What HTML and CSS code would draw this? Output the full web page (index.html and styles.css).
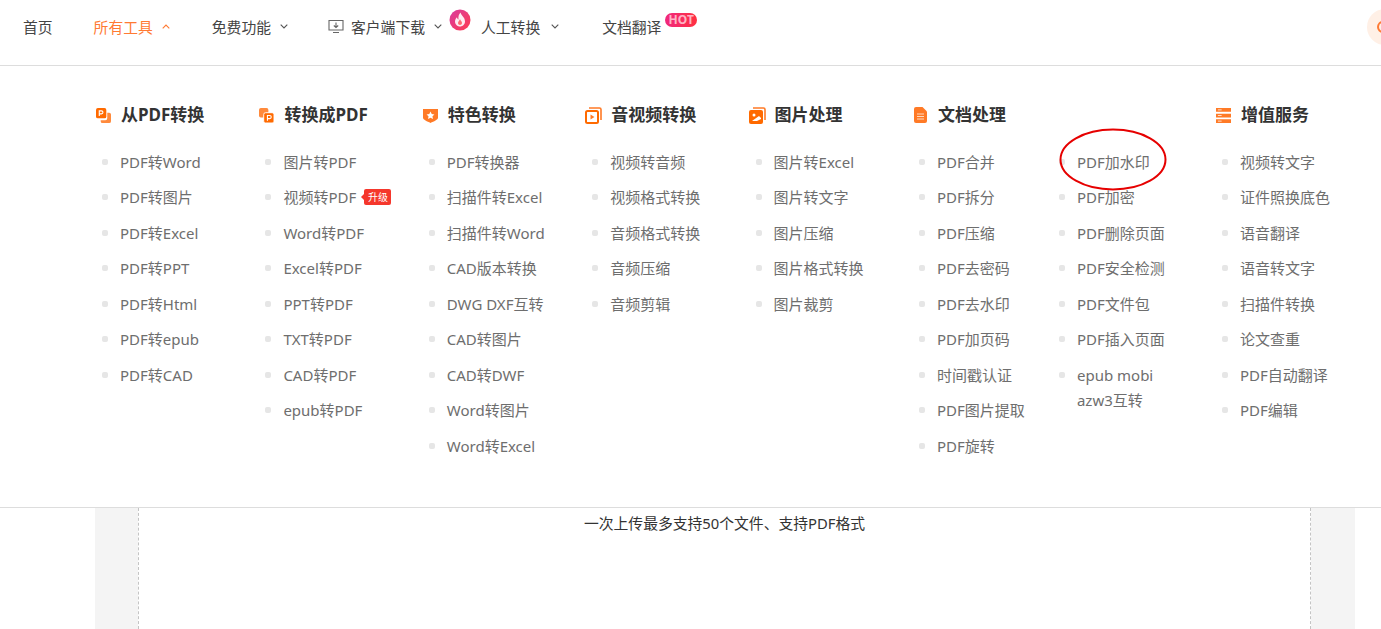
FILE: index.html
```html
<!DOCTYPE html>
<html lang="en">
<head>
    <meta charset="UTF-8">
    <meta name="viewport" content="width=device-width, initial-scale=1.0">
    <title>所有工具</title>
    <link rel="stylesheet" href="styles.css">
</head>
<body>
    <!-- top nav -->
    <div class="nav">
        <a class="nav-item nav-home">首页</a>
        <a class="nav-item nav-tools">所有工具
            <svg class="chev" viewBox="0 0 8 5"><path d="M.7 4.3 4 1l3.3 3.3" fill="none" stroke="#ff7a33" stroke-width="1.1"/></svg>
        </a>
        <a class="nav-item nav-free">免费功能
            <svg class="chev" viewBox="0 0 8 5"><path d="M.7.7 4 4 7.3.7" fill="none" stroke="#555" stroke-width="1.1"/></svg>
        </a>
        <a class="nav-item nav-client">
            <svg class="monitor" viewBox="0 0 16 15"><path d="M1 1.5h14v9.500H1zM5 13.500h6M8 3.500v5M5.800 6.500 8 8.500l2.200-2" fill="none" stroke="#666" stroke-width="1.100"/></svg>
            客户端下载
            <svg class="chev" viewBox="0 0 8 5"><path d="M.7.7 4 4 7.3.7" fill="none" stroke="#555" stroke-width="1.1"/></svg>
            <svg class="flame" viewBox="0 0 22 22">
                <defs><linearGradient id="fl" x1="0" y1="0" x2="1" y2="1"><stop offset="0" stop-color="#d93aa0"/><stop offset="1" stop-color="#ff3d4f"/></linearGradient></defs>
                <circle cx="11" cy="11" r="10.500" fill="url(#fl)"/>
                <path d="M11.500 3.500c.5 3 4.500 4.500 4.500 9 0 2.800-2.200 5-5 5s-5-2.200-5-5c0-2 1-3.300 2-4.300.2 1.200.7 2 1.500 2.300-.4-2.800.3-5.300 2-7z" fill="#fff" opacity=".9"/>
                <path d="M11 10c.3 1.500 2 2.200 2 4 0 1.200-.9 2-2 2s-2-.8-2-2c0-1.700 1.600-2.300 2-4z" fill="#ff6a70"/>
            </svg>
        </a>
        <a class="nav-item nav-human">人工转换
            <svg class="chev chev-wide" viewBox="0 0 8 5"><path d="M.7.7 4 4 7.3.7" fill="none" stroke="#555" stroke-width="1.1"/></svg>
        </a>
        <a class="nav-item nav-translate">文档翻译<span class="hot">HOT</span></a>
        <div class="avatar"><span class="avatar-ring"></span></div>
    </div>

    <!-- tools dropdown -->
    <div class="menu">
        <div class="col">
            <h3 class="col-title">
                <svg class="ico" viewBox="0 0 16 16"><rect x="0" y="0" width="11" height="11" rx="2" fill="#ff6a00"/><path d="M12 5h2a2 2 0 0 1 2 2v7a2 2 0 0 1-2 2H7a2 2 0 0 1-2-2v-1h5a2 2 0 0 0 2-2z" fill="#ff8a3c"/><path d="M3.500 8.500V3h2.300a1.500 1.500 0 0 1 0 3.200H3.500" fill="none" stroke="#fff" stroke-width="1.200"/></svg>
                从PDF转换
            </h3>
            <ul class="tool-list">
                <li>PDF转Word</li>
                <li>PDF转图片</li>
                <li>PDF转Excel</li>
                <li>PDF转PPT</li>
                <li>PDF转Html</li>
                <li>PDF转epub</li>
                <li>PDF转CAD</li>
            </ul>
        </div>
        <div class="col">
            <h3 class="col-title">
                <svg class="ico" viewBox="0 0 16 16"><rect x="0" y="0" width="10" height="10" rx="2" fill="#ff8a3c"/><rect x="5" y="5" width="11" height="11" rx="2" fill="#ff6a00" stroke="#fff" stroke-width="1"/><path d="M9 13.500V8h2.400a1.600 1.600 0 0 1 0 3.300H9" fill="none" stroke="#fff" stroke-width="1.200"/></svg>
                转换成PDF
            </h3>
            <ul class="tool-list">
                <li>图片转PDF</li>
                <li>视频转PDF<span class="up-tag">升级</span></li>
                <li>Word转PDF</li>
                <li>Excel转PDF</li>
                <li>PPT转PDF</li>
                <li>TXT转PDF</li>
                <li>CAD转PDF</li>
                <li>epub转PDF</li>
            </ul>
        </div>
        <div class="col">
            <h3 class="col-title">
                <svg class="ico" viewBox="0 0 16 16"><path d="M0 1h16v9.500c0 2-4.500 4-8 5.500-3.500-1.500-8-3.500-8-5.500z" fill="#ff7a26"/><path d="m8 3.700 1.300 2.700 2.900.4-2.100 2 .5 2.900L8 10.300l-2.600 1.400.5-2.900-2.100-2 2.900-.4z" fill="#fff"/></svg>
                特色转换
            </h3>
            <ul class="tool-list">
                <li>PDF转换器</li>
                <li>扫描件转Excel</li>
                <li>扫描件转Word</li>
                <li>CAD版本转换</li>
                <li>DWG DXF互转</li>
                <li>CAD转图片</li>
                <li>CAD转DWF</li>
                <li>Word转图片</li>
                <li>Word转Excel</li>
            </ul>
        </div>
        <div class="col">
            <h3 class="col-title">
                <svg class="ico ico-wide" viewBox="0 0 17 17"><path d="M4 1h10.500A1.500 1.500 0 0 1 16 2.500V13" fill="none" stroke="#ff7a26" stroke-width="1.600"/><rect x="1" y="4" width="12" height="12" rx="1.500" fill="none" stroke="#ff6a00" stroke-width="2"/><path d="M5.500 7.500 9.500 10l-4 2.500z" fill="#ff7a26"/></svg>
                音视频转换
            </h3>
            <ul class="tool-list">
                <li>视频转音频</li>
                <li>视频格式转换</li>
                <li>音频格式转换</li>
                <li>音频压缩</li>
                <li>音频剪辑</li>
            </ul>
        </div>
        <div class="col">
            <h3 class="col-title">
                <svg class="ico ico-wide" viewBox="0 0 17 17"><path d="M4 1h10.500A1.500 1.500 0 0 1 16 2.500V13" fill="none" stroke="#ff7a26" stroke-width="1.600"/><rect x="0" y="3" width="14" height="14" rx="2" fill="#ff6a00"/><circle cx="5" cy="8" r="1.500" fill="#fff"/><path d="m3 14 7-5 2 2v1l-4 2z" fill="#fff"/></svg>
                图片处理
            </h3>
            <ul class="tool-list">
                <li>图片转Excel</li>
                <li>图片转文字</li>
                <li>图片压缩</li>
                <li>图片格式转换</li>
                <li>图片裁剪</li>
            </ul>
        </div>
        <div class="col col-doc">
            <h3 class="col-title">
                <svg class="ico ico-doc" viewBox="0 0 13 16"><path d="M2 0h6.500L13 4.500V14a2 2 0 0 1-2 2H2a2 2 0 0 1-2-2V2a2 2 0 0 1 2-2z" fill="#ff7a26"/><path d="M3 7h7M3 9.500h7M3 12h7" stroke="#ffd9bf" stroke-width="1"/></svg>
                文档处理
            </h3>
            <div class="doc-lists">
                <ul class="tool-list">
                    <li>PDF合并</li>
                    <li>PDF拆分</li>
                    <li>PDF压缩</li>
                    <li>PDF去密码</li>
                    <li>PDF去水印</li>
                    <li>PDF加页码</li>
                    <li>时间戳认证</li>
                    <li>PDF图片提取</li>
                    <li>PDF旋转</li>
                </ul>
                <ul class="tool-list tool-list-sub">
                    <li class="circled">PDF加水印
                        <svg class="mark" viewBox="0 0 108 63"><ellipse cx="54" cy="31.500" rx="52.500" ry="30" fill="none" stroke="#e60000" stroke-width="2"/></svg>
                    </li>
                    <li>PDF加密</li>
                    <li>PDF删除页面</li>
                    <li>PDF安全检测</li>
                    <li>PDF文件包</li>
                    <li>PDF插入页面</li>
                    <li>epub mobi azw3互转</li>
                </ul>
            </div>
        </div>
        <div class="col">
            <h3 class="col-title">
                <svg class="ico" viewBox="0 0 16 16"><path d="M0 0h16v4H0zM0 6h16v4H0zM0 12h16v4H0z" fill="#ff7a26"/><path d="M2 2h4M2 8h4M2 14h4" stroke="#fff" stroke-width=".8"/></svg>
                增值服务
            </h3>
            <ul class="tool-list">
                <li>视频转文字</li>
                <li>证件照换底色</li>
                <li>语音翻译</li>
                <li>语音转文字</li>
                <li>扫描件转换</li>
                <li>论文查重</li>
                <li>PDF自动翻译</li>
                <li>PDF编辑</li>
            </ul>
        </div>
    </div>

    <!-- upload panel behind the dropdown -->
    <div class="upload-panel">
        <div class="upload-box">一次上传最多支持50个文件、支持PDF格式</div>
    </div>
</body>
</html>
```

FILE: styles.css
```css
* {
    box-sizing: border-box;
}
html, body {
    height: 100%;
}
body {
    margin: 0;
    overflow: hidden;
    display: flex;
    flex-direction: column;
    background-color: #fff;
    font-family: "Noto Sans", "Noto Sans CJK SC", sans-serif;
    color: #333;
}

/* nav */
.nav {
    height: 66px;
    flex: none;
    display: flex;
    align-items: center;
    padding: 0 0 12px 23px;
    border-bottom: 1px solid #ddd;
    font-size: 14.8px;
    overflow: hidden;
}
.nav-item {
    display: flex;
    align-items: center;
    position: relative;
    color: #444;
    white-space: nowrap;
}
.nav-home {
    margin-right: 41px;
}
.nav-tools {
    color: #ff7a33;
    margin-right: 42px;
}
.nav-free {
    margin-right: 40px;
}
.nav-client {
    margin-right: 39px;
}
.nav-human {
    margin-right: 43px;
}
.chev {
    width: 8px;
    height: 5px;
    margin-left: 9px;
}
.chev-wide {
    margin-left: 11px;
}
.monitor {
    width: 16px;
    height: 15px;
    margin-right: 7px;
}
.flame {
    position: absolute;
    left: 121px;
    top: -7px;
    width: 22px;
    height: 22px;
}
.hot {
    position: absolute;
    left: 63px;
    top: -3px;
    width: 32px;
    height: 14px;
    border-radius: 7px;
    background: linear-gradient(90deg, #f0287e, #ff3040);
    color: #ffb3c4;
    font-size: 12px;
    font-weight: 700;
    line-height: 14px;
    text-align: center;
}
.avatar {
    width: 36px;
    height: 36px;
    flex: none;
    margin-left: auto;
    margin-right: -22px;
    border-radius: 50%;
    background-color: #fff0e6;
    display: flex;
    align-items: center;
    padding-left: 10px;
}
.avatar-ring {
    width: 12px;
    height: 12px;
    border: 2px solid #ff7a33;
    border-radius: 50%;
}

/* dropdown */
.menu {
    height: 442px;
    flex: none;
    display: flex;
    padding: 38px 0 0 95px;
    border-bottom: 1px solid #ddd;
}
.col {
    width: 163.4px;
    flex: none;
}
.col-doc {
    width: 303px;
}
.col-title {
    display: flex;
    align-items: center;
    gap: 10px;
    height: 22px;
    margin: 0 0 23.7px;
    font-size: 17px;
    font-weight: 700;
    line-height: 22px;
    color: #333;
    white-space: nowrap;
}
.ico {
    width: 15px;
    height: 15px;
    margin-left: 1px;
    flex: none;
}
.ico-wide {
    width: 17px;
    height: 17px;
    margin-left: 0;
    margin-right: -1px;
}
.ico-doc {
    width: 13px;
    height: 16px;
    margin-left: 2px;
    margin-right: 1px;
}
.doc-lists {
    display: flex;
}
.tool-list {
    list-style: none;
    width: 140px;
    margin: 0;
    padding: 0 0 0 25px;
    display: flex;
    flex-direction: column;
    gap: 10px;
    font-size: 15px;
    line-height: 25.5px;
    color: #6e6e6e;
}
.tool-list li {
    position: relative;
}
.tool-list li::before {
    content: "";
    position: absolute;
    left: -18px;
    top: 9px;
    width: 6px;
    height: 6px;
    border-radius: 2px;
    background-color: #e6e6e6;
}
.tool-list-sub {
    padding-left: 25px;
}
.up-tag {
    position: absolute;
    left: 81px;
    top: 4px;
    width: 27px;
    height: 16px;
    background-color: #f5372c;
    border-radius: 2px;
    color: #fff;
    font-size: 10px;
    line-height: 16px;
    text-align: center;
}
.up-tag::before {
    content: "";
    position: absolute;
    left: -3px;
    top: 5px;
    border-top: 3px solid transparent;
    border-bottom: 3px solid transparent;
    border-right: 3px solid #f5372c;
}
.mark {
    position: absolute;
    left: -18px;
    top: -21.5px;
    width: 108px;
    height: 63px;
}

/* upload panel */
.upload-panel {
    flex: 1;
    margin: 0 26px 0 95px;
    padding: 0 44px 0 43px;
    background-color: #f4f4f4;
}
.upload-box {
    height: 100%;
    background-color: #fff;
    border-left: 1px dashed #c4c4c4;
    border-right: 1px dashed #c4c4c4;
    padding-top: 3px;
    text-align: center;
    font-size: 14.8px;
    line-height: 24px;
    color: #333;
}
```
